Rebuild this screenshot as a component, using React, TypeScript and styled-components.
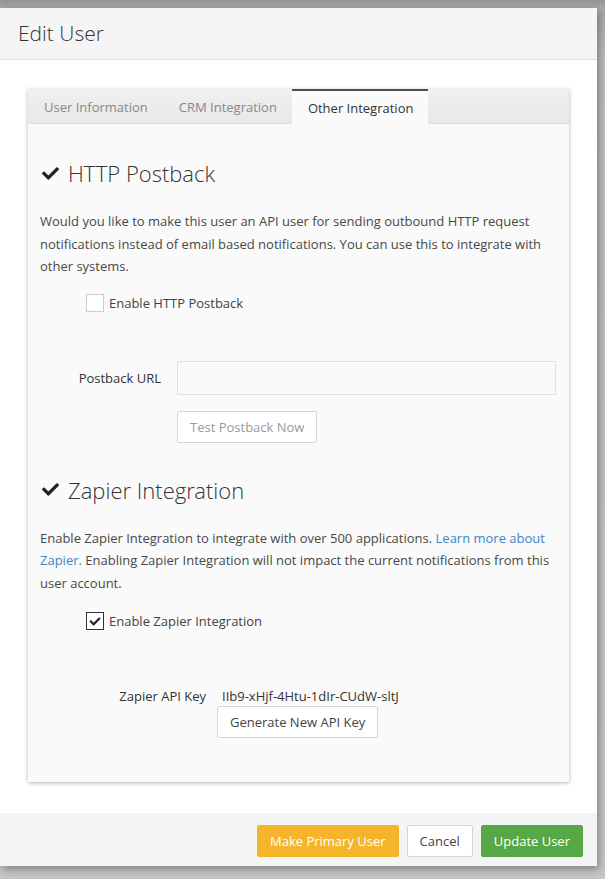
import React, { FC, ReactNode } from "react";
import styled, { createGlobalStyle } from "styled-components";
import { FaCheck } from "react-icons/fa";

const GlobalStyle = createGlobalStyle`
    html, body {
        margin: 0;
        padding: 0;
    }
    body {
        width: 605px;
        height: 879px;
        overflow: hidden;
        background: linear-gradient(to bottom, #939393 0, #a9a9a9 8px, #bdbdbd 60px, #c6c6c6 100%);
        font-family: "Open Sans", "Noto Sans", sans-serif;
        color: #4a4a4a;
    }
`;

const Modal = styled.div`
    margin-top: 8px;
    width: 597px;
    height: 858px;
    background: #fff;
    display: flex;
    flex-direction: column;
    box-shadow: 2px 3px 8px rgba(0, 0, 0, 0.35);
`;

const Header = styled.div`
    height: 51px;
    background: #f5f5f5;
    border-bottom: 1px solid #e2e2e2;
    display: flex;
    align-items: center;
    padding-left: 18px;
`;

const Title = styled.h2`
    margin: 0 0 2px;
    font-family: "Open Sans Light", "Open Sans", sans-serif;
    font-size: 21px;
    font-weight: 300;
    color: #333;
`;

const Body = styled.div`
    flex: 1;
    padding: 29px 28px 30px;
`;

const Panel = styled.div`
    height: 693px;
    background: #fafafa;
    box-shadow: 0 1px 4px rgba(0, 0, 0, 0.3);
    display: flex;
    flex-direction: column;
`;

const TabBar = styled.div`
    height: 35px;
    display: flex;
    background: linear-gradient(to bottom, #f0f0f0, #e8e8e8);
    border-bottom: 1px solid #ddd;
    box-sizing: border-box;
`;

const Tab = styled.div<{ $active?: boolean }>`
    padding: 0 15px 0 16px;
    display: flex;
    align-items: center;
    font-size: 13px;
    color: ${({ $active }) => ($active ? "#333" : "#888")};
    background: ${({ $active }) => ($active ? "#fafafa" : "transparent")};
    border-top: 2px solid ${({ $active }) => ($active ? "#4d4d4d" : "transparent")};
    margin-bottom: ${({ $active }) => ($active ? "-1px" : "0")};
    box-sizing: border-box;
`;

const Content = styled.div`
    padding: 0 13px 0 12px;
`;

const SectionTitle = styled.h3<{ $top: number }>`
    margin: ${({ $top }) => $top}px 0 0;
    font-family: "Open Sans Light", "Open Sans", sans-serif;
    font-size: 22px;
    font-weight: 300;
    color: #333;
    line-height: 24px;
    display: flex;
    align-items: center;
    gap: 7px;

    svg {
        width: 21px;
        height: 17px;
        color: #222;
    }
`;

const Paragraph = styled.p<{ $top: number }>`
    margin: ${({ $top }) => $top}px 0 0;
    font-size: 13px;
    line-height: 22.5px;
    color: #484848;
`;

const Link = styled.a`
    color: #3b86c4;
    text-decoration: none;
`;

const CheckRow = styled.label<{ $top: number }>`
    margin: ${({ $top }) => $top}px 0 0 46px;
    display: flex;
    align-items: center;
    gap: 5px;
    font-size: 13px;
    height: 22px;
    color: #444;
`;

const Box = styled.span<{ $checked?: boolean }>`
    width: 18px;
    height: 18px;
    box-sizing: border-box;
    background: #fff;
    border: 1px solid ${({ $checked }) => ($checked ? "#333" : "#ccc")};
    display: flex;
    align-items: center;
    justify-content: center;

    svg {
        width: 12px;
        height: 11px;
        color: #222;
    }
`;

const FormRow = styled.div<{ $top: number; $label: number }>`
    margin-top: ${({ $top }) => $top}px;
    display: grid;
    grid-template-columns: ${({ $label }) => $label}px 1fr;
    column-gap: 16px;
    row-gap: 16px;
    align-items: center;
`;

const FieldLabel = styled.div<{ $top?: boolean }>`
    text-align: right;
    font-size: 13px;
    line-height: 18px;
    color: #333;
    align-self: ${({ $top }) => ($top ? "start" : "center")};
`;

const Input = styled.input`
    height: 34px;
    box-sizing: border-box;
    border: 1px solid #e2e2e2;
    background: #fafafa;
    font-family: inherit;
    font-size: 13px;
    outline: none;
`;

const Button = styled.button<{ $variant?: "default" | "muted" | "warning" | "success" }>`
    height: 32px;
    padding: 0 12px;
    font-family: "Open Sans", "Noto Sans", sans-serif;
    font-size: 13px;
    border-radius: 2px;
    cursor: pointer;
    justify-self: start;
    border: 1px solid
        ${({ $variant }) =>
            $variant === "warning" ? "#f4b52b" : $variant === "success" ? "#56a846" : "#d4d4d4"};
    background: ${({ $variant }) =>
        $variant === "warning" ? "#f4b52b" : $variant === "success" ? "#56a846" : "#fff"};
    color: ${({ $variant }) =>
        $variant === "warning" || $variant === "success"
            ? "#fff"
            : $variant === "muted"
            ? "#9a9a9a"
            : "#444"};
`;

const KeyValue = styled.div`
    font-size: 13px;
    color: #333;
    line-height: 18px;
    padding-left: 5px;
`;

const KeyBlock = styled.div`
    display: flex;
    flex-direction: column;
    align-items: flex-start;
    gap: 1px;
    margin-left: -5px;
`;

const Footer = styled.div`
    height: 53px;
    background: #f4f4f4;
    display: flex;
    align-items: center;
    justify-content: flex-end;
    gap: 8px;
    padding: 2px 14px 0 0;
    box-sizing: border-box;
`;

const Checkbox: FC<{ checked?: boolean; top: number; children: ReactNode }> = ({ checked, top, children }) => (
    <CheckRow $top={top}>
        <Box $checked={checked}>{checked && <FaCheck />}</Box>
        {children}
    </CheckRow>
);

export default function App() {
    return (
        <>
            <GlobalStyle />
            <Modal>
                <Header>
                    <Title>Edit User</Title>
                </Header>
                <Body>
                    <Panel>
                        <TabBar>
                            <Tab>User Information</Tab>
                            <Tab>CRM Integration</Tab>
                            <Tab $active>Other Integration</Tab>
                        </TabBar>
                        <Content>
                            <SectionTitle $top={37}>
                                <FaCheck />
                                HTTP Postback
                            </SectionTitle>
                            <Paragraph $top={25}>
                                Would you like to make this user an API user for sending outbound HTTP request
                                notifications instead of email based notifications. You can use this to integrate with
                                other systems.
                            </Paragraph>
                            <Checkbox top={14}>Enable HTTP Postback</Checkbox>
                            <FormRow $top={47} $label={121}>
                                <FieldLabel>Postback URL</FieldLabel>
                                <Input />
                                <span />
                                <Button $variant="muted">Test Postback Now</Button>
                            </FormRow>
                            <SectionTitle $top={35}>
                                <FaCheck />
                                Zapier Integration
                            </SectionTitle>
                            <Paragraph $top={25}>
                                Enable Zapier Integration to integrate with over 500 applications.{" "}
                                <Link href="#">Learn more about Zapier.</Link> Enabling Zapier Integration will not
                                impact the current notifications from this user account.
                            </Paragraph>
                            <Checkbox checked top={16}>
                                Enable Zapier Integration
                            </Checkbox>
                            <FormRow $top={55} $label={166}>
                                <FieldLabel $top>Zapier API Key</FieldLabel>
                                <KeyBlock>
                                    <KeyValue>IIb9-xHjf-4Htu-1dIr-CUdW-sltJ</KeyValue>
                                    <Button>Generate New API Key</Button>
                                </KeyBlock>
                            </FormRow>
                        </Content>
                    </Panel>
                </Body>
                <Footer>
                    <Button $variant="warning">Make Primary User</Button>
                    <Button>Cancel</Button>
                    <Button $variant="success">Update User</Button>
                </Footer>
            </Modal>
        </>
    );
}
